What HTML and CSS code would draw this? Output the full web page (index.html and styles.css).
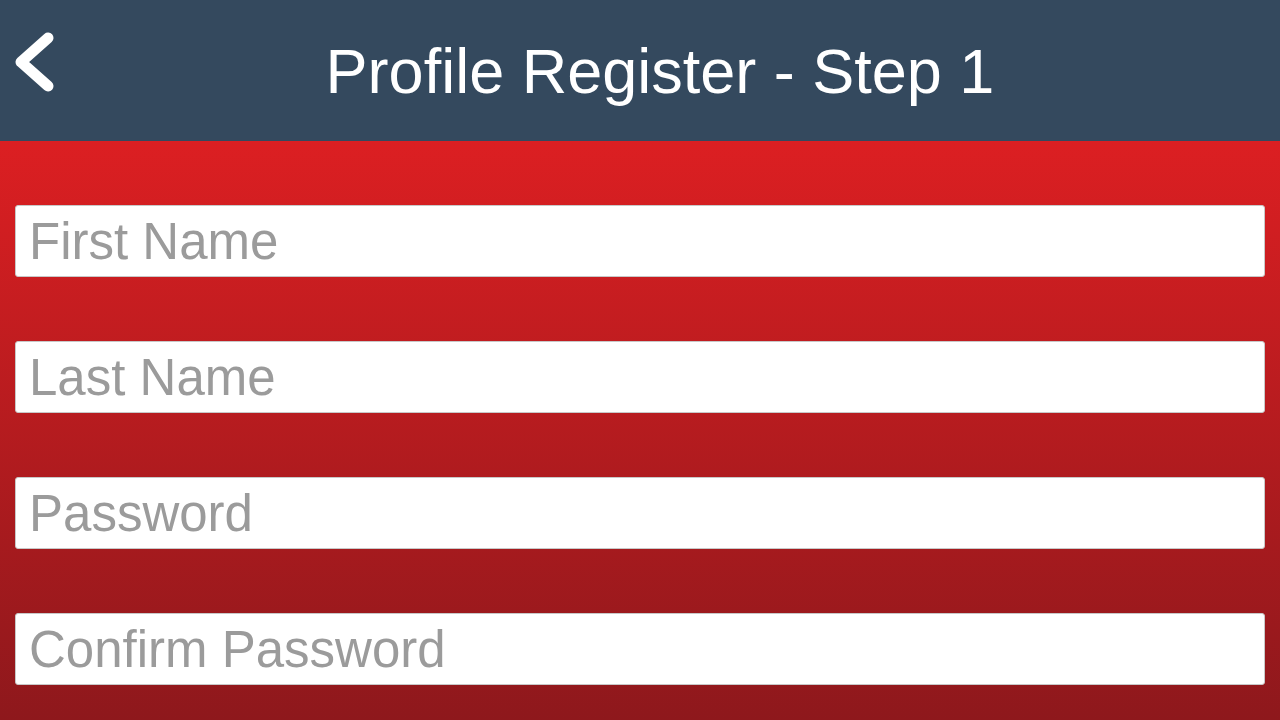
FILE: index.html
```html
<!DOCTYPE html>
<html lang="en">
<head>
<meta charset="utf-8">
<title>Profile Register - Step 1</title>
<link rel="stylesheet" href="styles.css">
</head>
<body>
<header class="topbar">
  <button class="back" aria-label="Back">
    <svg width="44" height="64" viewBox="0 0 44 64"><polyline points="37,8 10,32 37,56" fill="none" stroke="#fff" stroke-width="11" stroke-linecap="round" stroke-linejoin="round"/></svg>
  </button>
  <h1 class="title">Profile Register - Step 1</h1>
</header>
<main class="form">
  <input class="field" type="text" placeholder="First Name">
  <input class="field" type="text" placeholder="Last Name">
  <input class="field" type="password" placeholder="Password">
  <input class="field" type="password" placeholder="Confirm Password">
</main>
</body>
</html>
```
FILE: styles.css
```css
html, body {
  margin: 0;
  height: 100%;
}
body {
  font-family: "Liberation Sans", Arial, sans-serif;
  display: flex;
  flex-direction: column;
  background: #8e181c;
  overflow: hidden;
}
.topbar {
  height: 141px;
  flex: none;
  background: #34495e;
  display: flex;
  align-items: center;
  position: relative;
}
.back {
  position: absolute;
  left: 11px;
  top: 30px;
  background: none;
  border: 0;
  padding: 0;
  width: 44px;
  height: 64px;
}
.back svg { display: block; }
.title {
  flex: 1;
  margin: 0;
  padding-left: 40px;
  text-align: center;
  color: #fff;
  font-weight: normal;
  font-size: 63px;
  line-height: 1;
  margin-top: 1px;
}
.form {
  flex: 1;
  background: linear-gradient(to bottom, #dc1f22 0%, #8e181c 100%);
  padding: 64px 15px 0;
  display: flex;
  flex-direction: column;
  gap: 64px;
}
.field {
  box-sizing: border-box;
  height: 72px;
  width: 100%;
  border: 1px solid #c8c8c8;
  border-radius: 3px;
  background: #fff;
  padding: 0 13px;
  font-family: "Liberation Sans", Arial, sans-serif;
  font-size: 51px;
  color: #333;
  outline: none;
}
.field::placeholder {
  color: #9b9b9b;
  opacity: 1;
}
```
